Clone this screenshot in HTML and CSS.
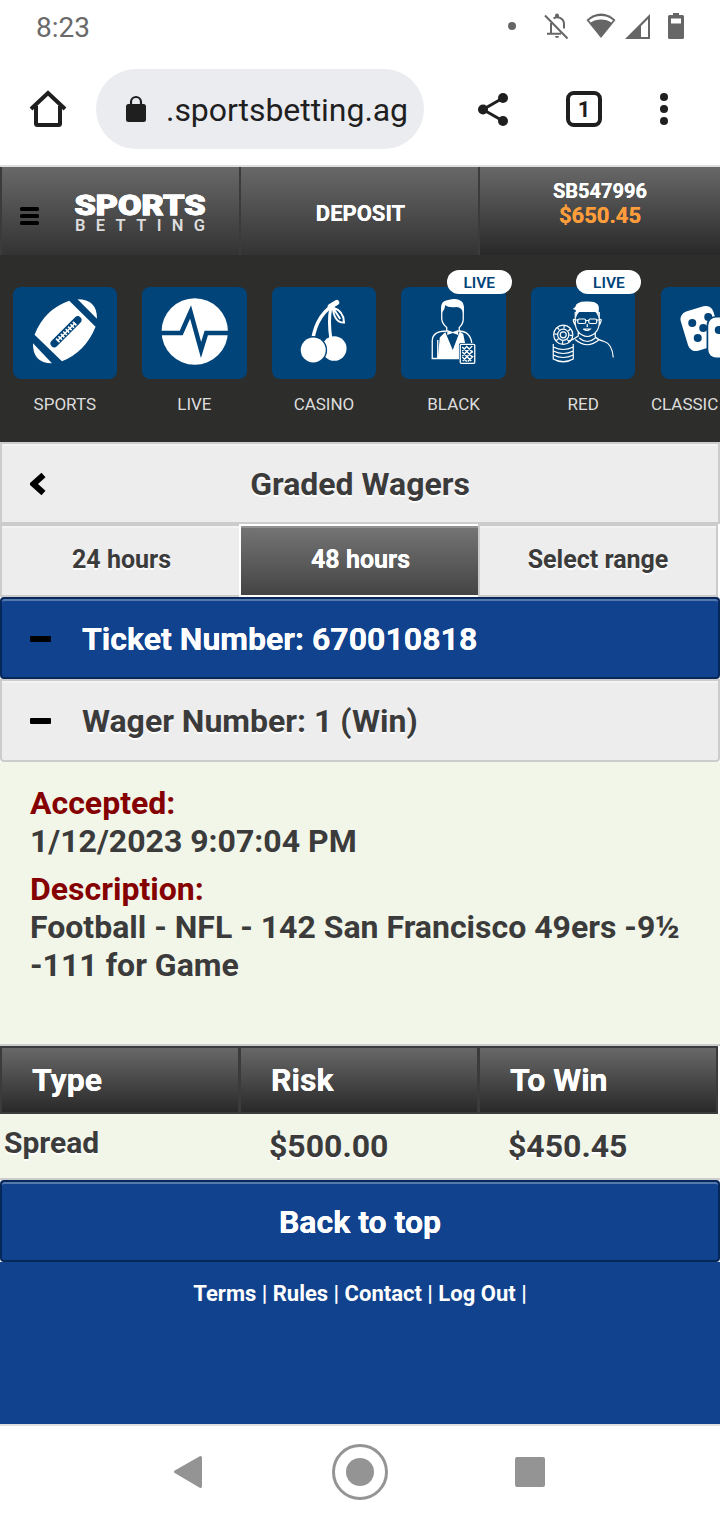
FILE: index.html
```html
<!DOCTYPE html>
<html lang="en">
<head>
<meta charset="utf-8">
<title>Graded Wagers</title>
<link rel="stylesheet" href="styles.css">
</head>
<body>
<div class="status">
  <span class="clock">8:23</span>
  <svg class="status-icons" viewBox="500 8 190 36" width="190" height="36">
    <g fill="#666">
      <circle cx="512" cy="26" r="4"/>
      <g fill="none" stroke="#666" stroke-width="2">
        <path d="M545 15.5L567.5 38.5M551 23V33.5M547 33.7H561M553.5 18.5C557 15.5 564 18 564 24V28.5"/>
      </g>
      <path d="M555 17V15.5a2 2 0 0 1 4 0V17zM555 36h4a2 2 0 0 1-4 0z"/>
      <path d="M601 38L586.500 20Q593 13.500 601 13.500T615.500 20z"/>
      <path d="M589 20.300Q594 16 601 16T613 20.300L611.300 22.500Q607 19.500 601 19.500T590.700 22.500z" fill="#fff"/>
      <path d="M650 14V39H625zM648 19L641 26V37H648z" fill-rule="evenodd"/>
      <path d="M673 13h6v2h3.500q1.500 0 1.500 1.500V37.500q0 1.500-1.500 1.500h-13q-1.500 0-1.500-1.500V16.500q0-1.500 1.500-1.500H673zM671 18.500V23.500h10V18.500z" fill-rule="evenodd"/>
    </g>
  </svg>
</div>
<div class="toolbar">
  <svg class="home" viewBox="28 89 40 40" width="40" height="40"><path d="M31 109L48 93L65 109M36 106V123.500Q36 125 37.500 125H58.500Q60 125 60 123.500V106" fill="none" stroke="#1f1f1f" stroke-width="4"/></svg>
  <div class="address">
    <svg viewBox="126 95 20 28" width="20" height="28"><rect x="126" y="104" width="20" height="18" rx="2.500" fill="#1f1f1f"/><path d="M131 105V102a5 5 0 0 1 10 0V105" fill="none" stroke="#1f1f1f" stroke-width="2.200"/></svg>
    <span>.sportsbetting.ag</span>
  </div>
  <svg class="share" viewBox="476 90 34 38" width="34" height="38"><path d="M503 98L483 109.500L503 121" fill="none" stroke="#1f1f1f" stroke-width="3"/><g fill="#1f1f1f"><circle cx="503" cy="98" r="5"/><circle cx="483" cy="109.500" r="5"/><circle cx="503" cy="121" r="5"/></g></svg>
  <div class="tab-count">1</div>
  <svg class="more" viewBox="658 90 12 38" width="12" height="38" fill="#1f1f1f"><circle cx="664" cy="97" r="4"/><circle cx="664" cy="109" r="4"/><circle cx="664" cy="121" r="4"/></svg>
</div>
<nav class="top">
  <div class="top-cell brand">
    <svg viewBox="20 190 200 48" width="200" height="48">
      <g fill="#000"><rect x="20" y="207" width="19" height="4" rx="1.500"/><rect x="20" y="214" width="19" height="4" rx="1.500"/><rect x="20" y="221" width="19" height="4" rx="1.500"/></g>
      <text class="logo-main" x="74.500" y="214.500" textLength="131" lengthAdjust="spacingAndGlyphs">SPORTS</text>
      <text class="logo-sub" x="75" y="231" textLength="130">BETTING</text>
    </svg>
  </div>
  <div class="top-cell deposit">DEPOSIT</div>
  <div class="top-cell account"><span>SB547996</span><span class="balance">$650.45</span></div>
</nav>
<div class="games">
  <div class="game">
    <svg viewBox="13 287 104 92" class="tile"><g fill="#fff"><path d="M69 300.700L95.300 326.700Q85.500 351.500 61.700 361.300L34.300 334.700Q44 309.500 69 300.700z"/><path d="M77.300 299.300Q97 299.500 96.700 318.700z"/><path d="M32.700 343.300Q32.500 363.500 51.700 363.300z"/></g><path d="M54 343.500L77.500 320" stroke="#004479" stroke-width="7.500" stroke-linecap="round"/><path d="M57 341L75 323" stroke="#fff" stroke-width="5" stroke-dasharray="1.600 1.800"/><path d="M57 341L75 323" stroke="#fff" stroke-width="1.500"/></svg>
    <span class="label">SPORTS</span>
  </div>
  <div class="game">
    <svg viewBox="143 287 104 92" class="tile"><circle cx="195.500" cy="331.500" r="33.200" fill="#fff"/><path d="M160 333H182L191.300 312L201.800 350L207 333H231" fill="none" stroke="#004479" stroke-width="4.500" stroke-miterlimit="12"/></svg>
    <span class="label">LIVE</span>
  </div>
  <div class="game">
    <svg viewBox="272 287 104 92" class="tile"><g fill="none" stroke="#fff"><path d="M312.500 339Q317 313 337 302.500" stroke-width="3.500" stroke-linecap="round"/><path d="M330.500 338Q328 321 330.500 308" stroke-width="3"/><path d="M330 306.500L336.500 302.500" stroke-width="5" stroke-linecap="round"/><path d="M332.500 307.500Q343.500 311 343.800 322.500Q334 323 332.500 307.500L340 319" stroke-width="2"/></g><circle cx="334" cy="348.500" r="12.300" fill="#fff"/><circle cx="313" cy="350" r="13.900" fill="#004479"/><circle cx="313" cy="350" r="12.500" fill="#fff"/></svg>
    <span class="label">CASINO</span>
  </div>
  <div class="game">
    <svg viewBox="402 287 104 92" class="tile"><g fill="none" stroke="#fff" stroke-width="1.300"><path d="M442.500 309V319Q443 324 447.500 327.500V331Q433 331 433 341V358.500H460M460 331V327.500Q464 324 464 319V309M459 331Q471 331 472.500 343M438.500 358V340"/></g><path d="M442.500 313Q439.500 301 449 300Q458 297 463 302Q466 306 464 314Q463 307 457 307Q449 308 446 305Q446 309 442.500 313z" fill="#fff"/><path d="M446 332L440.500 337.500L438.500 359H460V344H466L464 334L460.500 331.500L453.500 350z" fill="#fff"/><path d="M448 330L453.500 332L459 330V335L453.500 333L448 335z" fill="#fff"/><rect x="459.700" y="343" width="17" height="21.500" rx="2" fill="#004479"/><rect x="461" y="344.300" width="14.500" height="19" rx="1" fill="#004479" stroke="#fff" stroke-width="1.300"/><path d="M463 347l10 10M463 352l9 9M463 357l4.500 4.500M468 347l5.500 5.500M473 346l-10 10M473.500 351l-10 10M474 356l-5.500 5.500M468 346l-5 5" stroke="#fff" stroke-width="1.400"/></svg>
    <span class="badge">LIVE</span>
    <span class="label">BLACK</span>
  </div>
  <div class="game">
    <svg viewBox="531 287 104 92" class="tile"><g fill="none" stroke="#fff" stroke-width="1.200"><path d="M575 312V324Q576 332 582 335Q587 338 592 335Q598 332 599 324V312M575 320Q572 318 573.500 322T576 326M599 320Q602 318 600.500 322T598 326M578 332V336Q573 340 568 341M595 332V337Q598 340 604 341.500Q612 344 613 357.500M579 338Q587 345 595 338M575 339.500Q587 350 599 339.500"/><rect x="577.500" y="319" width="8" height="4.500" rx="1.500"/><rect x="588.500" y="319" width="8" height="4.500" rx="1.500"/><path d="M575 320h3M585 320.500h4M596 320h3M587 324v3M583 329h7q-3 3-7 0"/><circle cx="563" cy="334.800" r="9.600"/><circle cx="563" cy="334.800" r="5.600"/><circle cx="563" cy="334.800" r="3"/><circle cx="563" cy="334.800" r="7.600" stroke-width="3" stroke-dasharray="1.200 4.770"/><path d="M553 344v15q10 6 20 0v-15M553 347q10 5 20 0M553 351q10 5 20 0M553 355q10 5 20 0M553 359q10 5 20 0"/></g><path d="M575.500 319V310L572.500 309L575 307Q576 301 587 301.500Q600 301 598.500 310V319Q597 313 595 312H579Q576.500 314 575.500 319z" fill="#fff"/></svg>
    <span class="badge">LIVE</span>
    <span class="label">RED</span>
  </div>
  <div class="game">
    <svg viewBox="661 287 104 92" class="tile"><rect x="683.500" y="308" width="34" height="41" rx="8" fill="#fff" transform="rotate(-17 700.500 328.500)"/><g fill="#004479"><circle cx="692" cy="323" r="4"/><circle cx="708" cy="317" r="4"/><circle cx="703" cy="328" r="4"/><circle cx="697.500" cy="338" r="4"/></g><rect x="706.300" y="316" width="45" height="43" rx="9" fill="#004479"/><rect x="708" y="317.500" width="42" height="40" rx="8" fill="#fff"/><circle cx="718.500" cy="330" r="4" fill="#004479"/></svg>
    <span class="label cut">CLASSIC</span>
  </div>
</div>
<header class="bar title">
  <svg viewBox="30 472 16 24" width="16" height="24"><path d="M43.500 475L33.500 484L43.500 493" fill="none" stroke="#000" stroke-width="6"/></svg>
  <h1>Graded Wagers</h1>
</header>
<div class="tabs"><div class="tab">24 hours</div><div class="tab active">48 hours</div><div class="tab">Select range</div></div>
<div class="bar ticket"><i class="minus"></i><span>Ticket Number: 670010818</span></div>
<div class="bar wager"><i class="minus"></i><span>Wager Number: 1 (Win)</span></div>
<section class="details">
  <div class="field"><b>Accepted:</b><span>1/12/2023 9:07:04 PM</span></div>
  <div class="field"><b>Description:</b><span>Football - NFL - 142 San Francisco 49ers -9½ <br>-111 for Game</span></div>
</section>
<div class="row head"><div>Type</div><div>Risk</div><div>To Win</div></div>
<div class="row values"><div class="kind">Spread</div><div>$500.00</div><div>$450.45</div></div>
<div class="bar back">Back to top</div>
<footer>Terms | Rules | Contact | Log Out |</footer>
<div class="android">
  <svg viewBox="170 1440 380 64" width="380" height="64"><g fill="#949494"><path d="M200.500 1457.500L175.500 1471.800L200.500 1486.500z" stroke="#949494" stroke-width="3" stroke-linejoin="round"/><circle cx="360" cy="1472" r="14"/><circle cx="360" cy="1472" r="26.500" fill="none" stroke="#949494" stroke-width="3"/><rect x="515" y="1457" width="30" height="30" rx="2"/></g></svg>
</div>
</body>
</html>
```
FILE: styles.css
```css
* { box-sizing: border-box; }
body {
  margin: 0;
  width: 720px;
  height: 1520px;
  overflow: hidden;
  background: #fff;
  font-family: Roboto, sans-serif;
  color: #3b3b3b;
}
svg { display: block; flex: none; }
.status { display: flex; justify-content: space-between; height: 53px; padding: 8px 30px 0 36px; }
.clock { font-size: 28px; font-weight: 450; line-height: 40px; color: #696969; }
.toolbar { display: flex; align-items: center; height: 114px; padding: 0 50px 0 28px; border-bottom: 2px solid #dcdee0; }
.address { display: flex; align-items: center; gap: 20px; width: 328px; height: 80px; margin-left: 28px; padding-left: 30px; border-radius: 40px; background: #ebecf0; color: #1f1f1f; font-size: 32px; letter-spacing: -.05px; white-space: nowrap; }
.address span { padding-top: 2px; }
.share { margin-left: 52px; }
.tab-count { width: 36px; height: 36px; margin-left: 56px; border: 4px solid #1f1f1f; border-radius: 8px; color: #1f1f1f; font-size: 22px; font-weight: 700; line-height: 29px; text-align: center; }
.more { margin-left: 56px; }
.top { display: grid; grid-template-columns: 239px 239px 242px; grid-template-rows: 88px; height: 88px; color: #fff; font-size: 22px; font-weight: 700; text-shadow: 0 0 #fff; }
.top-cell { border-left: 2px solid #3b3b3b; background: linear-gradient(#686868, #333); }
.brand { padding: 23px 0 0 18px; }
.logo-main { fill: #fff; stroke: #fff; stroke-width: .8px; font: 900 27px Roboto, sans-serif; }
.logo-sub { fill: #ddd; font: 600 16.500px Roboto, sans-serif; text-shadow: none; }
.deposit { padding-left: 2px; text-align: center; line-height: 93px; }
.account { display: flex; flex-direction: column; align-items: center; padding-top: 12px; font-size: 20px; line-height: 25px; background: linear-gradient(#686868, #282828); }
.balance { margin-top: -1px; color: #ff9d3b; font-size: 22px; text-shadow: 0 0 #ff9d3b; }
.games { display: grid; grid-template-columns: repeat(6, 129.6px); height: 187px; padding-top: 32px; background: #2d2d2b; overflow: hidden; }
.game { position: relative; display: flex; flex-direction: column; align-items: center; }
.tile { width: 104.500px; height: 92px; border-radius: 8px; background: #004479; }
.label { margin-top: 15px; font-size: 17px; line-height: 21px; color: #ddd; }
.label.cut { align-self: flex-start; margin-left: 3px; }
.badge { position: absolute; left: 58px; top: -17px; width: 65px; height: 24px; border-radius: 12px; background: #fff; color: #004479; font-size: 15.500px; font-weight: 600; line-height: 26px; text-align: center; }
.bar { display: flex; align-items: center; height: 82px; border: 2px solid #ccc; background: #ededed; box-shadow: inset 0 2px #f3f3f3; font-size: 32px; font-weight: 700; text-shadow: 0 2px #fff; }
.title { padding: 2px 0 0 28px; }
.title h1 { flex: 1; margin: 0 44px 0 0; font: inherit; font-weight: 700; text-align: center; line-height: 38px; }
.tabs { display: grid; grid-template-columns: 239px 239px 240px; height: 73px; font-size: 25px; font-weight: 700; text-align: center; line-height: 67px; text-shadow: 0 2px #fff; }
.tab { padding-left: 2px; border: 2px solid #ccc; border-right: 0; background: #ededed; box-shadow: inset 0 2px #f3f3f3; }
.tab:last-child { padding-left: 0; border-right: 2px solid #ccc; }
.tab.active { border-color: #fff; background: linear-gradient(#757575, #444); box-shadow: inset 0 2px #929292; color: #fff; text-shadow: 0 0 #fff; }
.ticket, .back { padding-top: 2px; border-color: #06275a; border-radius: 4px; background: #11428e; box-shadow: inset 0 2px #5578ad; color: #fff; text-shadow: 0 0 #fff; }
.ticket, .wager { gap: 31px; padding-left: 28px; }
.wager { height: 83px; border-radius: 0 0 4px 4px; }
.minus { width: 21px; height: 6px; border-radius: 1px; background: #000; }
.details { display: flex; flex-direction: column; gap: 10px; height: 282px; padding: 22px 30px 0; background: #f2f6e8; font-size: 32px; font-weight: 700; line-height: 38px; white-space: nowrap; }
.field { display: flex; flex-direction: column; }
.field b { color: #850000; font-weight: 700; }
.row { display: grid; grid-template-columns: 239px 239px 240px; font-size: 32px; font-weight: 700; }
.head { height: 70px; border-top: 2px solid #ccc; color: #fff; line-height: 64px; text-shadow: 0 0 #fff; }
.head div { padding-left: 30px; border: 2px solid #3b3b3b; border-right-width: 1px; background: linear-gradient(#686868, #292929); }
.head div:last-child { border-right-width: 2px; }
.values { width: 720px; height: 66px; background: #f2f6e8; border-bottom: 2px solid #ccc; line-height: 64px; text-shadow: 0 2px #fff; }
.values div { padding-left: 30px; }
.values .kind { padding-left: 4px; font-size: 30px; line-height: 58px; }
.back { justify-content: center; }
footer { height: 162px; padding-top: 16px; background: #11428e; color: #fff; font-size: 22px; font-weight: 700; line-height: 31px; text-align: center; }
.android { display: flex; justify-content: center; height: 96px; padding-top: 14px; border-top: 2px solid #e0e0e0; background: #fff; }
```
